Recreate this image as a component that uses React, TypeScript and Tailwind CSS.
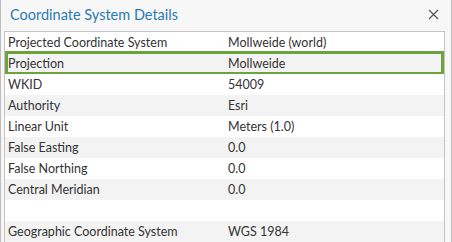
import React from "react";

const rows: [string, string][] = [
  ["Projected Coordinate System", "Mollweide (world)"],
  ["Projection", "Mollweide"],
  ["WKID", "54009"],
  ["Authority", "Esri"],
  ["Linear Unit", "Meters (1.0)"],
  ["False Easting", "0.0"],
  ["False Northing", "0.0"],
  ["Central Meridian", "0.0"],
  ["", ""],
  ["Geographic Coordinate System", "WGS 1984"],
];

export default function App() {
  return (
    <div
      className="w-[452px] h-[242px] overflow-hidden bg-[#f7f7f7] border-l border-r border-[#bdbdbd] flex flex-col"
      style={{ fontFamily: "Lato, 'Noto Sans', sans-serif" }}
    >
      <div className="h-[31px] flex items-center justify-between pl-[9px] pr-[12px] shrink-0">
        <span className="text-[14.5px] text-[#2a7ab3] leading-none mt-[-1px]">Coordinate System Details</span>
        <svg width="11" height="11" viewBox="0 0 11 11" className="mt-[-3px]">
          <path d="M1 1 L10 10 M10 1 L1 10" stroke="#5a5a5a" strokeWidth="1.3" />
        </svg>
      </div>
      <div className="ml-[3px] mr-[6px] border border-[#c4c4c4] bg-white flex-1">
        {rows.map(([k, v], i) => (
          <div
            key={i}
            className={`relative h-[21px] flex items-center pt-[1px] text-[12.5px] text-[#333] ${i % 2 === 1 ? "bg-[#f3f3f3]" : "bg-white"}`}
          >
            <span className="w-[223px] pl-[3px] shrink-0">{k}</span>
            <span>{v}</span>
            {i === 1 && (
              <div className="absolute left-[0px] right-[0px] -top-[2px] -bottom-[1px] border-[3px] border-[#6ea23d]" />
            )}
          </div>
        ))}
      </div>
    </div>
  );
}
